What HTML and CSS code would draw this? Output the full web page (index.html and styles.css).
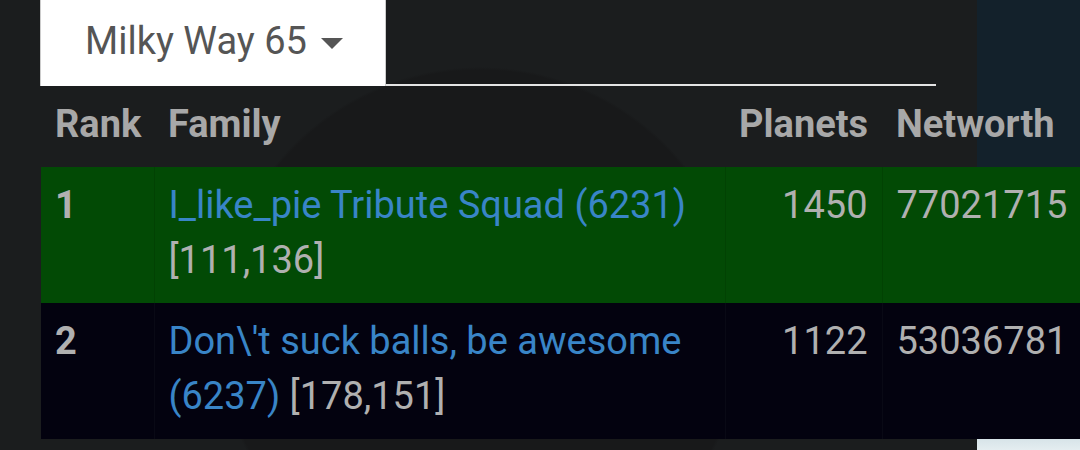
FILE: index.html
```html
<!DOCTYPE html>
<html lang="en">
<head>
  <meta charset="UTF-8" />
  <meta name="viewport" content="width=device-width, initial-scale=1.0"/>
  <title>Family Ranking</title>
  <link rel="stylesheet" href="styles.css">
</head>
<body>

<div class="nav-tabs">
  <div class="tab active">Milky Way 65 <span class="caret"></span></div>
</div>

<table class="ranking">
  <colgroup>
    <col class="c-rank">
    <col class="c-family">
    <col class="c-planets">
    <col class="c-networth">
  </colgroup>
  <thead>
    <tr>
      <th>Rank</th>
      <th>Family</th>
      <th class="num">Planets</th>
      <th>Networth</th>
    </tr>
  </thead>
  <tbody>
    <tr class="own">
      <td class="rank">1</td>
      <td><a href="#">I_like_pie Tribute Squad (6231)</a> [111,136]</td>
      <td class="num">1450</td>
      <td>77021715</td>
    </tr>
    <tr>
      <td class="rank">2</td>
      <td><a href="#">Don\'t suck balls, be awesome (6237)</a> [178,151]</td>
      <td class="num">1122</td>
      <td>53036781</td>
    </tr>
  </tbody>
</table>

</body>
</html>
```

FILE: styles.css
```css
html, body {
  height: 100%;
  overflow: hidden;
}
body {
  margin: 0;
  font-family: Roboto, "Liberation Sans", sans-serif;
  font-size: 38px;
  line-height: 55px;
  color: #b0b0b0;
  background:
    linear-gradient(#d6e3e8, #e4edf0) right bottom / 103px 12px no-repeat,
    radial-gradient(circle at 480px 330px, #18191a 0, #18191a 260px, #1b1d1e 263px, #1b1d1e 100%) left top / 977px 100% no-repeat,
    #13212b;
}
.nav-tabs {
  display: flex;
  margin-left: 40px;
  width: 896px;
  height: 84px;
  border-bottom: 2px solid #e4e4e4;
}
.tab {
  background: white;
  color: #555;
  height: 86px;
  box-sizing: border-box;
  padding: 14px 42px 0 44px;
  border-left: 1px solid #ccc;
  border-right: 1px solid #ccc;
  white-space: nowrap;
}
.caret {
  display: inline-block;
  width: 0;
  height: 0;
  margin-left: 5px;
  vertical-align: middle;
  border-top: 11px solid #555;
  border-left: 11px solid transparent;
  border-right: 11px solid transparent;
}
.ranking {
  margin-left: 41px;
  width: 1041px;
  table-layout: fixed;
  border-collapse: collapse;
}
.c-rank { width: 113px; }
.c-family { width: 571px; }
.c-planets { width: 157px; }
.ranking th,
.ranking td {
  padding: 11px 14px 15px;
  text-align: left;
  vertical-align: top;
}
.ranking th {
  color: #a8a8a8;
  font-weight: bold;
}
.ranking .num {
  text-align: right;
}
.ranking .rank {
  font-weight: bold;
}
.ranking tbody tr {
  background: #03020f;
}
.ranking tbody td + td {
  border-left: 1px solid #090915;
}
.ranking tbody tr.own {
  background: #024a05;
}
.ranking tbody tr.own td + td {
  border-left-color: #014203;
}
.ranking a {
  color: #3985c7;
  text-decoration: none;
}
```
